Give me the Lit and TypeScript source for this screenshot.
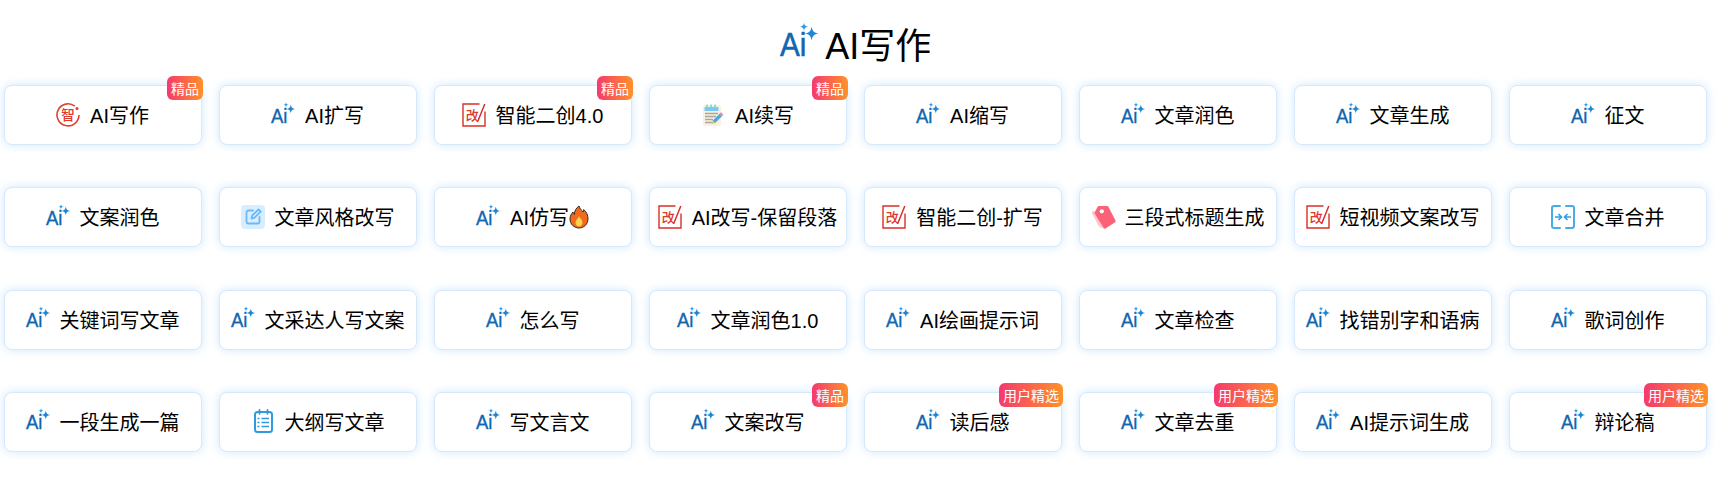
import { LitElement, html, css, svg } from "lit";
import { customElement } from "lit/decorators.js";

const stars = svg`<path d="M19.800 1.200c.6 3.100 1.300 3.800 4.400 4.400-3.100.6-3.800 1.300-4.400 4.400-.6-3.100-1.300-3.800-4.400-4.400 3.100-.6 3.800-1.300 4.400-4.400z" fill="#1f86d6" transform="translate(0 .4)"/><path d="M15 -.8c.3 1.700.8 2.200 2.500 2.500-1.700.3-2.200.8-2.500 2.500-.3-1.700-.8-2.200-2.500-2.500 1.700-.3 2.200-.8 2.500-2.500z" fill="#2f9be8"/>`;

const aiText = svg`<text x="0" y="20" class="ai" textLength="16.500" lengthAdjust="spacingAndGlyphs">Ai</text>`;
const aiIcon = html`<svg class="ic" viewBox="0 0 24 24">${aiText}${stars}</svg>`;
const aiBig = html`<svg class="ic big" viewBox="0 0 24 24">${aiText}${stars}</svg>`;

const gaiIcon = html`<svg class="ic" viewBox="0 0 24 24"><path d="M17.500 1H1v22h22V8.500" fill="none" stroke="#d9302a" stroke-width="1.400"/><text x="3.800" y="17" class="seal" font-size="13">改</text><path d="M22.800 1 15.500 19" stroke="#d9302a" stroke-width="1.500" fill="none"/></svg>`;

const icons: Record<string, unknown> = {
  ai: aiIcon,
  zhi: html`<svg class="ic" viewBox="0 0 24 24"><path d="M18.800 3.200A11 11 0 1 0 23 12" fill="none" stroke="#e2402f" stroke-width="1.600"/><circle cx="21" cy="5.500" r="1.500" fill="#e2402f"/><text x="12" y="17" text-anchor="middle" class="seal" font-size="13.500">智</text></svg>`,
  gai: gaiIcon,
  note: html`<svg class="ic" viewBox="0 0 24 24"><rect x="2" y="2" width="18" height="21" rx="2" fill="#fbf0dd"/><rect x="3.500" y="4" width="14" height="4" fill="#7cc8f4"/><path d="M6 1.500v3M10 1.500v3M14 1.500v3" stroke="#6fdcc4" stroke-width="1.600"/><path d="M4 10.500h13M4 13.500h11M4 16.500h8M4 19.500h7" stroke="#a4a9a6" stroke-width="1.600"/><path d="M11 20.500l.8-3 7-7 2.400 2.400-7 7z" fill="#49a8e8"/><path d="M18.800 10.500l1.200-1.200 2.400 2.400-1.200 1.200z" fill="#f77f9b"/><path d="M11 20.500l.8-3 2.200 2.200z" fill="#f6c958"/></svg>`,
  edit: html`<svg class="ic" viewBox="0 0 24 24"><rect width="24" height="24" rx="4" fill="#d8edfe"/><path d="M12 5.500H7.500a2 2 0 0 0-2 2v9a2 2 0 0 0 2 2h9a2 2 0 0 0 2-2V12" fill="none" stroke="#6cb9f8" stroke-width="1.800" stroke-linecap="round"/><path d="M10.500 13.500l.6-2.800 6.400-6.200 2.200 2.200-6.400 6.200z" fill="none" stroke="#6cb9f8" stroke-width="1.800" stroke-linejoin="round"/></svg>`,
  tag: html`<svg class="ic" viewBox="0 0 24 24"><path d="M3 5.500 .5 7.500 8 21.500l5 2.500L5 8z" fill="#ffc6d0"/><path d="M6.500 2 Q7 1 8 1h8q1 0 1.500 1L24.500 15.500q.5 1-.4 1.700L14.500 23.600q-1 .6-1.700-.3L3.800 8.800q-.5-.8 0-1.500z" fill="#fb6178"/><circle cx="10.800" cy="6.300" r="2.100" fill="#fff"/></svg>`,
  merge: html`<svg class="ic" viewBox="0 0 24 24"><path d="M9 1H3a2 2 0 0 0-2 2v18a2 2 0 0 0 2 2h6M15 1h6a2 2 0 0 1 2 2v18a2 2 0 0 1-2 2h-6" fill="none" stroke="#49ace6" stroke-width="2" stroke-linecap="round"/><path d="M4 12h6.500M7.500 9 10.500 12l-3 3M20 12h-6.500M16.500 9 13.500 12l3 3" fill="none" stroke="#2e9fe0" stroke-width="1.600"/></svg>`,
  outline: html`<svg class="ic" viewBox="0 0 24 24"><rect x="4" y="3" width="17" height="20" rx="2.500" fill="none" stroke="#2f9ae0" stroke-width="2"/><path d="M8.500 .8v4M16.500 .8v4" stroke="#2f9ae0" stroke-width="1.800" stroke-linecap="round"/><path d="M10.500 9.500H18M10.500 13.500H18M10.500 17.500H18M6.500 9.500h2M6.500 13.500h2M6.500 17.500h2" stroke="#2f9ae0" stroke-width="1.700"/></svg>`,
};

const fire = html`<svg class="fire" viewBox="0 0 20 24"><path d="M10 1c1 3 2.500 4 4 6 .5-.8.700-1.500.7-2.500C17.500 7 19 10 19 14c0 5-4 9-9 9s-9-4-9-9c0-3 1.500-5.500 3-7 .2 1.200.6 2 1.300 2.600C5.500 6 7 3 10 1z" fill="#f26a1b" stroke="#3a2a22" stroke-width="1"/><path d="M10 11c.5 2 3.500 3.500 3.500 6.500 0 2.200-1.500 4-3.500 4s-3.500-1.800-3.500-4C6.500 15 9.500 13.500 10 11z" fill="#fcd24f"/></svg>`;

type Card = { t: string; i?: string; b?: string; f?: boolean };
const J = "精品";
const U = "用户精选";
const cards: Card[] = [
  { t: "AI写作", i: "zhi", b: J },
  { t: "AI扩写" },
  { t: "智能二创4.0", i: "gai", b: J },
  { t: "AI续写", i: "note", b: J },
  { t: "AI缩写" },
  { t: "文章润色" },
  { t: "文章生成" },
  { t: "征文" },
  { t: "文案润色" },
  { t: "文章风格改写", i: "edit" },
  { t: "AI仿写", f: true },
  { t: "AI改写-保留段落", i: "gai" },
  { t: "智能二创-扩写", i: "gai" },
  { t: "三段式标题生成", i: "tag" },
  { t: "短视频文案改写", i: "gai" },
  { t: "文章合并", i: "merge" },
  { t: "关键词写文章" },
  { t: "文采达人写文案" },
  { t: "怎么写" },
  { t: "文章润色1.0" },
  { t: "AI绘画提示词" },
  { t: "文章检查" },
  { t: "找错别字和语病" },
  { t: "歌词创作" },
  { t: "一段生成一篇" },
  { t: "大纲写文章", i: "outline" },
  { t: "写文言文" },
  { t: "文案改写", b: J },
  { t: "读后感", b: U },
  { t: "文章去重", b: U },
  { t: "AI提示词生成" },
  { t: "辩论稿", b: U },
];

@customElement("app-root")
export class AppRoot extends LitElement {
  static styles = css`
    :host {
      display: block;
      background: #fff;
      min-height: 484px;
      padding: 17px 18px 0 4px;
      box-sizing: border-box;
      font-family: "Liberation Sans", "Noto Sans CJK SC", sans-serif;
      color: #000;
    }
    .title {
      display: flex;
      justify-content: center;
      align-items: center;
      gap: 7px;
      height: 52px;
      margin-bottom: 16px;
      font-size: 36px;
    }
    .grid {
      display: grid;
      grid-template-columns: repeat(8, 198px);
      column-gap: 17px;
      row-gap: 42.33px;
      grid-auto-rows: 60px;
    }
    .card {
      position: relative;
      display: flex;
      justify-content: center;
      align-items: center;
      gap: 10px;
      box-sizing: border-box;
      padding: 0 1px 1px 0;
      background: #fff;
      border: 1px solid #d6e9fb;
      border-radius: 8px;
      box-shadow: 0 0 10px rgba(150, 205, 250, 0.45);
      font-size: 20px;
      white-space: nowrap;
    }
    .ic {
      width: 24px;
      height: 24px;
      flex: none;
      overflow: visible;
    }
    .ic.big {
      width: 38.4px;
      height: 38.4px;
    }
    .ai {
      font-family: "Liberation Sans", sans-serif;
      font-size: 21px;
      fill: #1166b0;
      stroke: #1166b0;
      stroke-width: 0.35px;
    }
    .seal {
      font-family: "Noto Sans CJK SC", sans-serif;
      font-weight: 500;
      fill: #dd3a2e;
    }
    .label {
      display: inline-flex;
      align-items: center;
    }
    .fire {
      width: 20px;
      height: 24px;
      flex: none;
    }
    .badge {
      position: absolute;
      top: -10px;
      right: -2px;
      height: 24px;
      padding: 0 4px;
      display: flex;
      align-items: center;
      border-radius: 6px;
      background: linear-gradient(90deg, #f5396f, #ff9229);
      color: #fff;
      font-size: 14px;
    }
  `;

  render() {
    return html`
      <div class="title">${aiBig}<span>AI写作</span></div>
      <div class="grid">
        ${cards.map(
          (c) => html`<div class="card">
            ${c.b ? html`<span class="badge">${c.b}</span>` : ""}
            ${icons[c.i ?? "ai"]}
            <span class="label">${c.t}${c.f ? fire : ""}</span>
          </div>`
        )}
      </div>
    `;
  }
}
